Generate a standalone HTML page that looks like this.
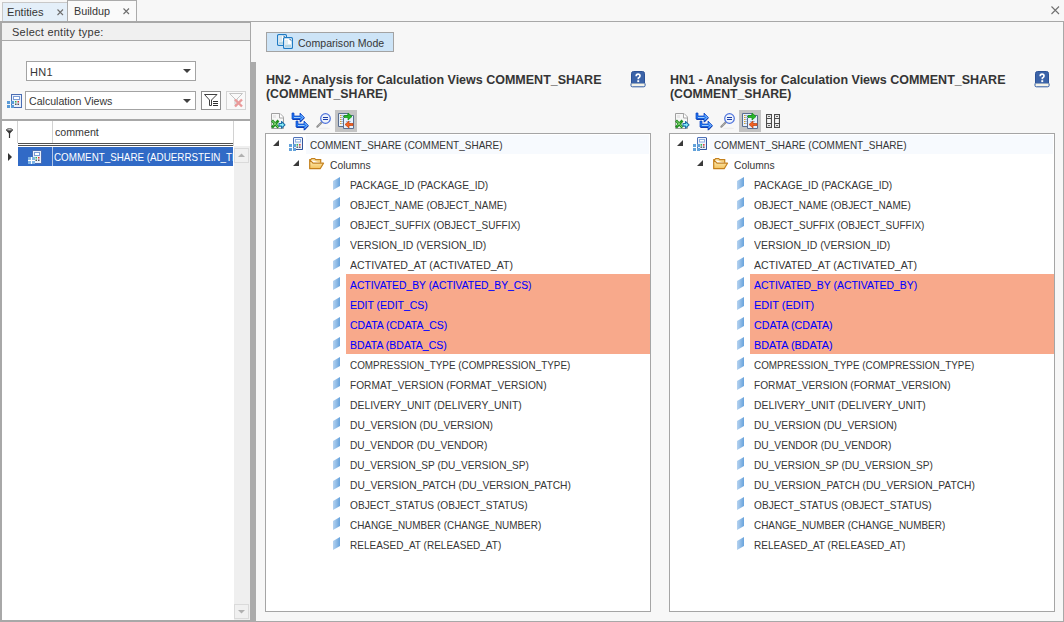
<!DOCTYPE html>
<html><head><meta charset="utf-8">
<style>
*{margin:0;padding:0;box-sizing:border-box}
html,body{width:1064px;height:622px;overflow:hidden;background:#f7f7f7;font-family:"Liberation Sans",sans-serif;font-size:11px;color:#363636;position:relative}
.a{position:absolute}
.t{position:absolute;white-space:pre;line-height:20px;height:20px;transform-origin:0 50%}
.c{transform:scaleX(.91)}
.m{transform:scaleX(.94)}
svg{position:absolute;overflow:visible}
</style></head><body>

<!-- ===== tabs ===== -->
<div class="a" style="left:2px;top:2px;width:66px;height:20px;background:#e4eff9;border:1px solid #c8c8c8;border-bottom:none"></div>
<div class="t" style="left:7px;top:2px;transform:scaleX(1.01)">Entities</div>
<svg style="left:0;top:0" width="1" height="1"><path d="M57.5 9.5l5.5 5.5M63 9.5l-5.5 5.5" stroke="#6e6e6e" stroke-width="1.1"/></svg>
<div class="a" style="left:67px;top:0;width:70px;height:23px;background:#fafafa;border:1px solid #ababab;border-bottom:none"></div>
<div class="t" style="left:74px;top:1px;transform:scaleX(.98)">Buildup</div>
<svg style="left:0;top:0" width="1" height="1"><path d="M123.5 8.5l5.5 5.5M129 8.5l-5.5 5.5" stroke="#6e6e6e" stroke-width="1.1"/></svg>
<svg style="left:0;top:0" width="1" height="1"><path d="M1051.5 6.5l7.5 7.5M1059 6.5l-7.5 7.5" stroke="#707070" stroke-width="1.1"/></svg>

<!-- frame top line -->
<div class="a" style="left:0;top:21px;width:1064px;height:1px;background:#a8a8a8"></div>

<!-- ===== left panel ===== -->
<div class="a" style="left:0;top:21px;width:251px;height:601px;border-left:2px solid #a8a8a8;border-top:2px solid #a8a8a8;border-bottom:2px solid #a8a8a8;border-right:1px solid #a8a8a8;background:#f7f7f7"></div>
<div class="a" style="left:2px;top:23px;width:248px;height:18px;background:#f0f0f0;border-bottom:1px solid #a8a8a8"></div>
<div class="t" style="left:12px;top:22px;letter-spacing:.25px">Select entity type:</div>

<!-- combos -->
<div class="a" style="left:26px;top:61px;width:170px;height:20px;background:#fff;border:1px solid #a3a3a3"></div>
<div class="t" style="left:30px;top:62px;letter-spacing:.3px">HN1</div>
<svg style="left:0;top:0" width="1" height="1"><path d="M183 69h8l-4 4z" fill="#404040"/></svg>

<div class="a" style="left:25px;top:91px;width:171px;height:19px;background:#fff;border:1px solid #a3a3a3"></div>
<div class="t" style="left:29px;top:91px;transform:scaleX(.963)">Calculation Views</div>
<svg style="left:0;top:0" width="1" height="1"><path d="M183 99h8l-4 4z" fill="#404040"/></svg>
<!-- calc icon small -->
<svg style="left:7px;top:94px" width="15" height="15" viewBox="0 0 15 15">
 <rect x="4.5" y="0.5" width="10" height="13" fill="#e9f0fb" stroke="#4a6db3"/>
 <rect x="6.5" y="2.5" width="6" height="3" fill="#fff" stroke="#7a9cd6"/>
 <rect x="8" y="7" width="1.5" height="1.5" fill="#2db34a"/><rect x="10.5" y="7" width="1.5" height="1.5" fill="#e03030"/>
 <rect x="8" y="9.5" width="1.5" height="1.5" fill="#555"/><rect x="10.5" y="9.5" width="1.5" height="1.5" fill="#555"/>
 <rect x="0" y="7" width="3" height="3" fill="#5a9ad6"/><rect x="4" y="7" width="3" height="3" fill="#5a9ad6"/>
 <rect x="0" y="11" width="3" height="3" fill="#5a9ad6"/><rect x="4" y="11" width="3" height="3" fill="#5a9ad6"/>
</svg>
<!-- filter buttons -->
<div class="a" style="left:201px;top:91px;width:20px;height:19px;border:1px solid #8e8e8e;background:#fff"></div>
<svg style="left:0;top:0" width="1" height="1"><path d="M204.5 94.5h12.5l-5.5 5.5v5.5h-2v-5.5z" fill="none" stroke="#404040" stroke-linejoin="round"/><path d="M213 101.5h5M213 103.5h5M213 105.5h5" stroke="#303030"/></svg>
<div class="a" style="left:226px;top:91px;width:20px;height:19px;border:1px solid #d4d4d4;background:#f9f9f9"></div>
<svg style="left:0;top:0" width="1" height="1"><path d="M229.5 93.5h13l-5.5 5.5v5.5h-2v-5.5z" fill="none" stroke="#c4c4c4"/><path d="M235 99.5l7 7M242 99.5l-7 7" stroke="#e99a9a" stroke-width="2.4"/></svg>

<!-- separator -->
<div class="a" style="left:2px;top:119px;width:248px;height:2px;background:#a8a8a8"></div>

<!-- grid -->
<div class="a" style="left:2px;top:121px;width:248px;height:499px;background:#fff"></div>
<div class="a" style="left:17px;top:121px;width:1px;height:22px;background:#d2d2d2"></div>
<div class="a" style="left:52px;top:121px;width:1px;height:22px;background:#d2d2d2"></div>
<div class="a" style="left:233px;top:121px;width:1px;height:25px;background:#d2d2d2"></div>
<svg style="left:0;top:0" width="1" height="1"><ellipse cx="9.5" cy="130" rx="3.2" ry="1.2" fill="none" stroke="#333" stroke-width="1"/><path d="M6.5 130.5l2.5 3h1l2.5-3z" fill="#333"/><path d="M9.5 133v5" stroke="#333" stroke-width="1.2"/></svg>
<div class="t" style="left:55px;top:122px;transform:scaleX(.968)">comment</div>
<div class="a" style="left:18px;top:143px;width:215px;height:1px;background:#505050"></div>
<div class="a" style="left:18px;top:145px;width:215px;height:1px;background:#505050"></div>
<div class="a" style="left:18px;top:147px;width:215px;height:19px;background:#316ac6"></div>
<div class="a" style="left:52px;top:147px;width:1px;height:19px;background:#b4c6e6"></div>
<svg style="left:0;top:0" width="1" height="1"><path d="M8 153v8l4-4z" fill="#333"/></svg>
<svg style="left:28px;top:150px" width="15" height="15" viewBox="0 0 15 15">
 <rect x="4.5" y="0.5" width="9" height="13" fill="#e9f0fb" stroke="#4a6db3"/>
 <rect x="6.5" y="2.5" width="5" height="3" fill="#fff" stroke="#7a9cd6"/>
 <rect x="7.5" y="7" width="1.5" height="1.5" fill="#2db34a"/><rect x="10" y="7" width="1.5" height="1.5" fill="#e03030"/>
 <rect x="7.5" y="9.5" width="1.5" height="1.5" fill="#555"/><rect x="10" y="9.5" width="1.5" height="1.5" fill="#555"/>
 <rect x="0" y="7" width="3" height="3" fill="#7fb4e4"/><rect x="4" y="7" width="3" height="3" fill="#7fb4e4"/>
 <rect x="0" y="11" width="3" height="3" fill="#7fb4e4"/><rect x="4" y="11" width="3" height="3" fill="#7fb4e4"/>
 <path d="M3.5 7v7M0 10.5h7" stroke="#fff"/>
</svg>
<div class="a" style="left:53px;top:147px;width:180px;height:19px;overflow:hidden">
 <div class="t" style="left:1px;top:0px;color:#fff;transform:scaleX(.893)">COMMENT_SHARE (ADUERRSTEIN_TEST)</div>
</div>
<!-- scrollbar -->
<div class="a" style="left:234px;top:146px;width:16px;height:474px;background:#efefef"></div>
<div class="a" style="left:234px;top:148px;width:15px;height:15px;border:1px solid #dadada;background:#f0f0f0"></div>
<svg style="left:0;top:0" width="1" height="1"><path d="M238 157h7l-3.5-3.5z" fill="#b0b0b0"/></svg>
<div class="a" style="left:234px;top:604px;width:15px;height:15px;border:1px solid #dadada;background:#f0f0f0"></div>
<svg style="left:0;top:0" width="1" height="1"><path d="M238 610h7l-3.5 3.5z" fill="#b0b0b0"/></svg>

<!-- splitter bar -->
<div class="a" style="left:250px;top:62px;width:6px;height:560px;background:#ababab"></div>

<!-- ===== right area ===== -->
<div class="a" style="left:1063px;top:21px;width:1px;height:601px;background:#a8a8a8"></div>
<div class="a" style="left:256px;top:621px;width:808px;height:1px;background:#a8a8a8"></div>

<!-- comparison mode -->
<div class="a" style="left:266px;top:32px;width:128px;height:20px;background:#cde4f7;border:1px solid #a3a3a3"></div>
<svg style="left:277px;top:34px" width="16" height="15" viewBox="0 0 16 15">
 <rect x="0.6" y="0.6" width="8.8" height="10.8" rx="1" fill="#fff" stroke="#1f7bc4" stroke-width="1.2"/>
 <rect x="2" y="2" width="3" height="5" fill="#d6e6ee"/><rect x="2" y="7.5" width="6" height="2.5" fill="#b4d6e4"/>
 <path d="M6.6 1.8q0.8 1.5 1.8 1.8" stroke="#1a5e9a" stroke-width="1" fill="none"/>
 <rect x="6.6" y="3.6" width="8.8" height="10.8" rx="1" fill="#fff" stroke="#1f7bc4" stroke-width="1.2"/>
 <rect x="8" y="6" width="3" height="4" fill="#e0edf2"/><rect x="8" y="10.5" width="6" height="2.5" fill="#b4d6e4"/>
 <path d="M12.6 4.8q0.8 1.5 1.8 1.8" stroke="#1a5e9a" stroke-width="1" fill="none"/>
</svg>
<div class="t" style="left:298px;top:33px;transform:scaleX(.959)">Comparison Mode</div>

<!-- titles -->
<div class="a" style="left:266px;top:73px;font-size:12.5px;font-weight:bold;line-height:14px;color:#353535;white-space:pre">HN2 - Analysis for Calculation Views COMMENT_SHARE</div>
<div class="a" style="left:266px;top:87px;font-size:12.5px;font-weight:bold;line-height:14px;color:#353535;white-space:pre;transform:scaleX(.982);transform-origin:0 0">(COMMENT_SHARE)</div>
<div class="a" style="left:670px;top:73px;font-size:12.5px;font-weight:bold;line-height:14px;color:#353535;white-space:pre">HN1 - Analysis for Calculation Views COMMENT_SHARE</div>
<div class="a" style="left:670px;top:87px;font-size:12.5px;font-weight:bold;line-height:14px;color:#353535;white-space:pre;transform:scaleX(.982);transform-origin:0 0">(COMMENT_SHARE)</div>

<!-- PANELS_PLACEHOLDER -->
<svg style="left:630px;top:71px" width="16" height="16" viewBox="0 0 16 16">
 <path d="M1.5 2.5q0-2 2-2h9q2 0 2 2v10.5h-13z" fill="#3b63a8" stroke="#2c5296"/>
 <rect x="1" y="12.5" width="14" height="2" fill="#f4f2e4"/>
 <path d="M1 12.5v2q0 1.3 1.3 1.3h11.5q1.3 0 1.3-1.3v-2" fill="none" stroke="#2f5aa0"/>
 <path d="M6.2 5.2q0-2 1.9-2t1.9 1.9q0 1.3-1.6 1.9v1.3" fill="none" stroke="#fff" stroke-width="1.7"/><rect x="7.3" y="9.2" width="1.9" height="1.9" fill="#fff"/>
</svg>
<svg style="left:269px;top:111px" width="20" height="20" viewBox="0 0 20 20">
 <path d="M2.5 2.5h8.5l3.5 3.5v11.5h-12z" fill="#f7f7f7" stroke="#a0a0a0"/><path d="M10.5 2.5v4.5h4" fill="#fff" stroke="#a8a8a8"/>
 <rect x="4" y="4" width="3" height="3" fill="#e8e8e8"/>
 <path d="M3 9.5l6.5 7M9.5 9.5l-6.5 7" stroke="#1f8f1f" stroke-width="2.6"/>
 <path d="M3.5 10l6 6.3M7 11.5l-2.5 3" stroke="#9ee08a" stroke-width="0.9"/>
 <path d="M10 12.5h2.5v-2l3.5 3.3-3.5 3.3v-2H10z" fill="#86f0f8" stroke="#1d6ea8" stroke-width="1.1" stroke-linejoin="round"/>
</svg>
<svg style="left:289px;top:110px" width="22" height="22" viewBox="0 0 22 22">
 <g id="ar265"><path d="M3 3H5V6H11V3L15.5 7.5L11 12V9H3Z" fill="#1f74ee" stroke="#0a3fc0" stroke-width="0.7" stroke-linejoin="round"/>
 <path d="M5 7.5H11.5M11.8 5.2L14 7.5L11.8 9.8" fill="none" stroke="#bfe2ff" stroke-width="0.8"/>
 <path d="M3.5 9.5H11M11.3 12.3L15.3 8" stroke="#0030a8" stroke-width="0.9"/></g>
 <use href="#ar265" x="4" y="8"/>
</svg>
<svg style="left:315px;top:111px" width="18" height="19" viewBox="0 0 18 19">
 <ellipse cx="9.5" cy="17.3" rx="5.5" ry="0.9" fill="#ececec"/>
 <path d="M6.8 11.2L2.3 15.7" stroke="#8c8c8c" stroke-width="2" stroke-linecap="round"/>
 <path d="M6.3 11.7L2.8 15.2" stroke="#e0e0e0" stroke-width="0.6" stroke-dasharray="1 1"/>
 <circle cx="10.5" cy="7.5" r="4.8" fill="#eef3fb" stroke="#4d72dc" stroke-width="1.2"/>
 <path d="M8 6.5h5M8 8.5h5" stroke="#1c3fa8" stroke-width="1"/>
</svg>
<div class="a" style="left:335px;top:110px;width:22px;height:22px;background:#c4c4c4"></div>
<svg style="left:338px;top:113px" width="17" height="17" viewBox="0 0 17 17">
 <path d="M0.5 0.5h9.5v13h-9.5z" fill="#e6f1fd" stroke="#5a6e90"/>
 <path d="M5.5 2.5h10v13h-10z" fill="#e6f1fd" stroke="#5a6e90"/>
 <path d="M3 2.5h4M3 4.5h4M3 6.5h2M3 8.5h2M3 10.5h2M8 8.5h5M8 10.5h5M8 12.5h5" stroke="#a6bcdc"/>
 <path d="M2 2.5h1.3M2 4.5h1.3M2 6.5h1.3M2 8.5h1.3M2 10.5h1.3" stroke="#e2a326"/>
 <path d="M6 2.5h4v-2.5l4 3.5-4 3.5v-2.5H6z" fill="#28b828" stroke="#118c11" stroke-width="0.7" stroke-linejoin="round"/>
 <path d="M15 10.5h-4v-2.5l-4 3.5 4 3.5v-2.5H15z" fill="#f26222" stroke="#c24412" stroke-width="0.7" stroke-linejoin="round"/>
</svg>
<div class="a" style="left:265px;top:133px;width:386px;height:479px;background:#fff;border:1px solid #a5a5a5"></div>
<div class="a" style="left:306px;top:135px;width:343px;height:19px;background:#f7fafe"></div>
<div class="a" style="left:346px;top:274px;width:304px;height:80px;background:#f8a98b"></div>
<svg style="left:0;top:0" width="1" height="1"><path d="M273 146h6v-6z" fill="#3a3a3a"/></svg>
<svg style="left:289px;top:137px" width="15" height="15" viewBox="0 0 15 15">
 <rect x="4.5" y="0.5" width="9" height="12" rx="0.5" fill="#edf3fc" stroke="#5072b8"/>
 <path d="M13.5 1v11.5H5" stroke="#33539c" fill="none"/>
 <rect x="6.5" y="2.5" width="5" height="2.5" fill="#fff" stroke="#8eaee0"/>
 <circle cx="8.3" cy="7.8" r="0.9" fill="#22b040"/><circle cx="10.8" cy="7.8" r="0.9" fill="#e02828"/>
 <circle cx="8.3" cy="10.2" r="0.9" fill="#6a6a6a"/><circle cx="10.8" cy="10.2" r="0.9" fill="#6a6a6a"/>
 <rect x="0" y="7" width="3" height="3" fill="#63a2da"/><rect x="4" y="7" width="3" height="3" fill="#63a2da"/>
 <rect x="0" y="11" width="3" height="3" fill="#63a2da"/><rect x="4" y="11" width="3" height="3" fill="#63a2da"/>
</svg>
<div class="t" style="left:310px;top:135px;transform:scaleX(0.9077)">COMMENT_SHARE (COMMENT_SHARE)</div>
<svg style="left:0;top:0" width="1" height="1"><path d="M293 166h6v-6z" fill="#3a3a3a"/></svg>
<svg style="left:309px;top:158px" width="15" height="12" viewBox="0 0 15 12">
 <defs><linearGradient id="fg309" x1="0" y1="0" x2="0" y2="1"><stop offset="0" stop-color="#fff3c4"/><stop offset="1" stop-color="#f3c25c"/></linearGradient></defs>
 <path d="M0.7 1.7h1l1-1h3l1 1h5v3" fill="url(#fg309)" stroke="#c4801c" stroke-width="1.2"/>
 <path d="M0.7 1.7v9h10.5l3.3-5.5H4z" fill="url(#fg309)" stroke="#c4801c" stroke-width="1.2" stroke-linejoin="round"/>
</svg>
<div class="t" style="left:330px;top:155px;transform:scaleX(0.9339)">Columns</div>
<svg style="left:333px;top:177px" width="7" height="13" viewBox="0 0 7 13"><defs><linearGradient id="cg" x1="0" y1="0" x2="1" y2="0"><stop offset="0" stop-color="#b6d3f0"/><stop offset="1" stop-color="#68a3dc"/></linearGradient></defs><path d="M0 4L7 0v9L0 13z" fill="url(#cg)"/></svg>
<div class="t" style="left:350px;top:175px;transform:scaleX(0.9254)">PACKAGE_ID (PACKAGE_ID)</div>
<svg style="left:333px;top:197px" width="7" height="13" viewBox="0 0 7 13"><defs><linearGradient id="cg" x1="0" y1="0" x2="1" y2="0"><stop offset="0" stop-color="#b6d3f0"/><stop offset="1" stop-color="#68a3dc"/></linearGradient></defs><path d="M0 4L7 0v9L0 13z" fill="url(#cg)"/></svg>
<div class="t" style="left:350px;top:195px;transform:scaleX(0.906)">OBJECT_NAME (OBJECT_NAME)</div>
<svg style="left:333px;top:217px" width="7" height="13" viewBox="0 0 7 13"><defs><linearGradient id="cg" x1="0" y1="0" x2="1" y2="0"><stop offset="0" stop-color="#b6d3f0"/><stop offset="1" stop-color="#68a3dc"/></linearGradient></defs><path d="M0 4L7 0v9L0 13z" fill="url(#cg)"/></svg>
<div class="t" style="left:350px;top:215px;transform:scaleX(0.9082)">OBJECT_SUFFIX (OBJECT_SUFFIX)</div>
<svg style="left:333px;top:237px" width="7" height="13" viewBox="0 0 7 13"><defs><linearGradient id="cg" x1="0" y1="0" x2="1" y2="0"><stop offset="0" stop-color="#b6d3f0"/><stop offset="1" stop-color="#68a3dc"/></linearGradient></defs><path d="M0 4L7 0v9L0 13z" fill="url(#cg)"/></svg>
<div class="t" style="left:350px;top:235px;transform:scaleX(0.9491)">VERSION_ID (VERSION_ID)</div>
<svg style="left:333px;top:257px" width="7" height="13" viewBox="0 0 7 13"><defs><linearGradient id="cg" x1="0" y1="0" x2="1" y2="0"><stop offset="0" stop-color="#b6d3f0"/><stop offset="1" stop-color="#68a3dc"/></linearGradient></defs><path d="M0 4L7 0v9L0 13z" fill="url(#cg)"/></svg>
<div class="t" style="left:350px;top:255px;transform:scaleX(0.9643)">ACTIVATED_AT (ACTIVATED_AT)</div>
<svg style="left:333px;top:277px" width="7" height="13" viewBox="0 0 7 13"><defs><linearGradient id="cg" x1="0" y1="0" x2="1" y2="0"><stop offset="0" stop-color="#b6d3f0"/><stop offset="1" stop-color="#68a3dc"/></linearGradient></defs><path d="M0 4L7 0v9L0 13z" fill="url(#cg)"/></svg>
<div class="t" style="left:350px;top:275px;transform:scaleX(0.9389);color:#0000ff;-webkit-text-stroke:0.08px #0000ff">ACTIVATED_BY (ACTIVATED_BY_CS)</div>
<svg style="left:333px;top:297px" width="7" height="13" viewBox="0 0 7 13"><defs><linearGradient id="cg" x1="0" y1="0" x2="1" y2="0"><stop offset="0" stop-color="#b6d3f0"/><stop offset="1" stop-color="#68a3dc"/></linearGradient></defs><path d="M0 4L7 0v9L0 13z" fill="url(#cg)"/></svg>
<div class="t" style="left:350px;top:295px;transform:scaleX(0.9529);color:#0000ff;-webkit-text-stroke:0.08px #0000ff">EDIT (EDIT_CS)</div>
<svg style="left:333px;top:317px" width="7" height="13" viewBox="0 0 7 13"><defs><linearGradient id="cg" x1="0" y1="0" x2="1" y2="0"><stop offset="0" stop-color="#b6d3f0"/><stop offset="1" stop-color="#68a3dc"/></linearGradient></defs><path d="M0 4L7 0v9L0 13z" fill="url(#cg)"/></svg>
<div class="t" style="left:350px;top:315px;transform:scaleX(0.9481);color:#0000ff;-webkit-text-stroke:0.08px #0000ff">CDATA (CDATA_CS)</div>
<svg style="left:333px;top:337px" width="7" height="13" viewBox="0 0 7 13"><defs><linearGradient id="cg" x1="0" y1="0" x2="1" y2="0"><stop offset="0" stop-color="#b6d3f0"/><stop offset="1" stop-color="#68a3dc"/></linearGradient></defs><path d="M0 4L7 0v9L0 13z" fill="url(#cg)"/></svg>
<div class="t" style="left:350px;top:335px;transform:scaleX(0.9555);color:#0000ff;-webkit-text-stroke:0.08px #0000ff">BDATA (BDATA_CS)</div>
<svg style="left:333px;top:357px" width="7" height="13" viewBox="0 0 7 13"><defs><linearGradient id="cg" x1="0" y1="0" x2="1" y2="0"><stop offset="0" stop-color="#b6d3f0"/><stop offset="1" stop-color="#68a3dc"/></linearGradient></defs><path d="M0 4L7 0v9L0 13z" fill="url(#cg)"/></svg>
<div class="t" style="left:350px;top:355px;transform:scaleX(0.8988)">COMPRESSION_TYPE (COMPRESSION_TYPE)</div>
<svg style="left:333px;top:377px" width="7" height="13" viewBox="0 0 7 13"><defs><linearGradient id="cg" x1="0" y1="0" x2="1" y2="0"><stop offset="0" stop-color="#b6d3f0"/><stop offset="1" stop-color="#68a3dc"/></linearGradient></defs><path d="M0 4L7 0v9L0 13z" fill="url(#cg)"/></svg>
<div class="t" style="left:350px;top:375px;transform:scaleX(0.9231)">FORMAT_VERSION (FORMAT_VERSION)</div>
<svg style="left:333px;top:397px" width="7" height="13" viewBox="0 0 7 13"><defs><linearGradient id="cg" x1="0" y1="0" x2="1" y2="0"><stop offset="0" stop-color="#b6d3f0"/><stop offset="1" stop-color="#68a3dc"/></linearGradient></defs><path d="M0 4L7 0v9L0 13z" fill="url(#cg)"/></svg>
<div class="t" style="left:350px;top:395px;transform:scaleX(0.9428)">DELIVERY_UNIT (DELIVERY_UNIT)</div>
<svg style="left:333px;top:417px" width="7" height="13" viewBox="0 0 7 13"><defs><linearGradient id="cg" x1="0" y1="0" x2="1" y2="0"><stop offset="0" stop-color="#b6d3f0"/><stop offset="1" stop-color="#68a3dc"/></linearGradient></defs><path d="M0 4L7 0v9L0 13z" fill="url(#cg)"/></svg>
<div class="t" style="left:350px;top:415px;transform:scaleX(0.9322)">DU_VERSION (DU_VERSION)</div>
<svg style="left:333px;top:437px" width="7" height="13" viewBox="0 0 7 13"><defs><linearGradient id="cg" x1="0" y1="0" x2="1" y2="0"><stop offset="0" stop-color="#b6d3f0"/><stop offset="1" stop-color="#68a3dc"/></linearGradient></defs><path d="M0 4L7 0v9L0 13z" fill="url(#cg)"/></svg>
<div class="t" style="left:350px;top:435px;transform:scaleX(0.9246)">DU_VENDOR (DU_VENDOR)</div>
<svg style="left:333px;top:457px" width="7" height="13" viewBox="0 0 7 13"><defs><linearGradient id="cg" x1="0" y1="0" x2="1" y2="0"><stop offset="0" stop-color="#b6d3f0"/><stop offset="1" stop-color="#68a3dc"/></linearGradient></defs><path d="M0 4L7 0v9L0 13z" fill="url(#cg)"/></svg>
<div class="t" style="left:350px;top:455px;transform:scaleX(0.9185)">DU_VERSION_SP (DU_VERSION_SP)</div>
<svg style="left:333px;top:477px" width="7" height="13" viewBox="0 0 7 13"><defs><linearGradient id="cg" x1="0" y1="0" x2="1" y2="0"><stop offset="0" stop-color="#b6d3f0"/><stop offset="1" stop-color="#68a3dc"/></linearGradient></defs><path d="M0 4L7 0v9L0 13z" fill="url(#cg)"/></svg>
<div class="t" style="left:350px;top:475px;transform:scaleX(0.9324)">DU_VERSION_PATCH (DU_VERSION_PATCH)</div>
<svg style="left:333px;top:497px" width="7" height="13" viewBox="0 0 7 13"><defs><linearGradient id="cg" x1="0" y1="0" x2="1" y2="0"><stop offset="0" stop-color="#b6d3f0"/><stop offset="1" stop-color="#68a3dc"/></linearGradient></defs><path d="M0 4L7 0v9L0 13z" fill="url(#cg)"/></svg>
<div class="t" style="left:350px;top:495px;transform:scaleX(0.9211)">OBJECT_STATUS (OBJECT_STATUS)</div>
<svg style="left:333px;top:517px" width="7" height="13" viewBox="0 0 7 13"><defs><linearGradient id="cg" x1="0" y1="0" x2="1" y2="0"><stop offset="0" stop-color="#b6d3f0"/><stop offset="1" stop-color="#68a3dc"/></linearGradient></defs><path d="M0 4L7 0v9L0 13z" fill="url(#cg)"/></svg>
<div class="t" style="left:350px;top:515px;transform:scaleX(0.9015)">CHANGE_NUMBER (CHANGE_NUMBER)</div>
<svg style="left:333px;top:537px" width="7" height="13" viewBox="0 0 7 13"><defs><linearGradient id="cg" x1="0" y1="0" x2="1" y2="0"><stop offset="0" stop-color="#b6d3f0"/><stop offset="1" stop-color="#68a3dc"/></linearGradient></defs><path d="M0 4L7 0v9L0 13z" fill="url(#cg)"/></svg>
<div class="t" style="left:350px;top:535px;transform:scaleX(0.9095)">RELEASED_AT (RELEASED_AT)</div>
<svg style="left:1034px;top:71px" width="16" height="16" viewBox="0 0 16 16">
 <path d="M1.5 2.5q0-2 2-2h9q2 0 2 2v10.5h-13z" fill="#3b63a8" stroke="#2c5296"/>
 <rect x="1" y="12.5" width="14" height="2" fill="#f4f2e4"/>
 <path d="M1 12.5v2q0 1.3 1.3 1.3h11.5q1.3 0 1.3-1.3v-2" fill="none" stroke="#2f5aa0"/>
 <path d="M6.2 5.2q0-2 1.9-2t1.9 1.9q0 1.3-1.6 1.9v1.3" fill="none" stroke="#fff" stroke-width="1.7"/><rect x="7.3" y="9.2" width="1.9" height="1.9" fill="#fff"/>
</svg>
<svg style="left:673px;top:111px" width="20" height="20" viewBox="0 0 20 20">
 <path d="M2.5 2.5h8.5l3.5 3.5v11.5h-12z" fill="#f7f7f7" stroke="#a0a0a0"/><path d="M10.5 2.5v4.5h4" fill="#fff" stroke="#a8a8a8"/>
 <rect x="4" y="4" width="3" height="3" fill="#e8e8e8"/>
 <path d="M3 9.5l6.5 7M9.5 9.5l-6.5 7" stroke="#1f8f1f" stroke-width="2.6"/>
 <path d="M3.5 10l6 6.3M7 11.5l-2.5 3" stroke="#9ee08a" stroke-width="0.9"/>
 <path d="M10 12.5h2.5v-2l3.5 3.3-3.5 3.3v-2H10z" fill="#86f0f8" stroke="#1d6ea8" stroke-width="1.1" stroke-linejoin="round"/>
</svg>
<svg style="left:693px;top:110px" width="22" height="22" viewBox="0 0 22 22">
 <g id="ar669"><path d="M3 3H5V6H11V3L15.5 7.5L11 12V9H3Z" fill="#1f74ee" stroke="#0a3fc0" stroke-width="0.7" stroke-linejoin="round"/>
 <path d="M5 7.5H11.5M11.8 5.2L14 7.5L11.8 9.8" fill="none" stroke="#bfe2ff" stroke-width="0.8"/>
 <path d="M3.5 9.5H11M11.3 12.3L15.3 8" stroke="#0030a8" stroke-width="0.9"/></g>
 <use href="#ar669" x="4" y="8"/>
</svg>
<svg style="left:719px;top:111px" width="18" height="19" viewBox="0 0 18 19">
 <ellipse cx="9.5" cy="17.3" rx="5.5" ry="0.9" fill="#ececec"/>
 <path d="M6.8 11.2L2.3 15.7" stroke="#8c8c8c" stroke-width="2" stroke-linecap="round"/>
 <path d="M6.3 11.7L2.8 15.2" stroke="#e0e0e0" stroke-width="0.6" stroke-dasharray="1 1"/>
 <circle cx="10.5" cy="7.5" r="4.8" fill="#eef3fb" stroke="#4d72dc" stroke-width="1.2"/>
 <path d="M8 6.5h5M8 8.5h5" stroke="#1c3fa8" stroke-width="1"/>
</svg>
<div class="a" style="left:739px;top:110px;width:22px;height:22px;background:#c4c4c4"></div>
<svg style="left:742px;top:113px" width="17" height="17" viewBox="0 0 17 17">
 <path d="M0.5 0.5h9.5v13h-9.5z" fill="#e6f1fd" stroke="#5a6e90"/>
 <path d="M5.5 2.5h10v13h-10z" fill="#e6f1fd" stroke="#5a6e90"/>
 <path d="M3 2.5h4M3 4.5h4M3 6.5h2M3 8.5h2M3 10.5h2M8 8.5h5M8 10.5h5M8 12.5h5" stroke="#a6bcdc"/>
 <path d="M2 2.5h1.3M2 4.5h1.3M2 6.5h1.3M2 8.5h1.3M2 10.5h1.3" stroke="#e2a326"/>
 <path d="M6 2.5h4v-2.5l4 3.5-4 3.5v-2.5H6z" fill="#28b828" stroke="#118c11" stroke-width="0.7" stroke-linejoin="round"/>
 <path d="M15 10.5h-4v-2.5l-4 3.5 4 3.5v-2.5H15z" fill="#f26222" stroke="#c24412" stroke-width="0.7" stroke-linejoin="round"/>
</svg>
<svg style="left:766px;top:114px" width="14" height="14" viewBox="0 0 14 14">
 <g fill="none" stroke="#4b4b4b" stroke-width="1.1"><rect x="0.55" y="0.55" width="4.9" height="12.9"/><rect x="8.55" y="0.55" width="4.9" height="12.9"/>
 <path d="M0.5 4.5h5M0.5 9.5h5M8.5 4.5h5M8.5 9.5h5"/></g>
 <path d="M2 2.5h2M2 11.5h2M10 2.5h2M10 11.5h2" stroke="#555" stroke-width="0.9"/>
</svg>
<div class="a" style="left:669px;top:133px;width:386px;height:479px;background:#fff;border:1px solid #a5a5a5"></div>
<div class="a" style="left:710px;top:135px;width:343px;height:19px;background:#f7fafe"></div>
<div class="a" style="left:750px;top:274px;width:304px;height:80px;background:#f8a98b"></div>
<svg style="left:0;top:0" width="1" height="1"><path d="M677 146h6v-6z" fill="#3a3a3a"/></svg>
<svg style="left:693px;top:137px" width="15" height="15" viewBox="0 0 15 15">
 <rect x="4.5" y="0.5" width="9" height="12" rx="0.5" fill="#edf3fc" stroke="#5072b8"/>
 <path d="M13.5 1v11.5H5" stroke="#33539c" fill="none"/>
 <rect x="6.5" y="2.5" width="5" height="2.5" fill="#fff" stroke="#8eaee0"/>
 <circle cx="8.3" cy="7.8" r="0.9" fill="#22b040"/><circle cx="10.8" cy="7.8" r="0.9" fill="#e02828"/>
 <circle cx="8.3" cy="10.2" r="0.9" fill="#6a6a6a"/><circle cx="10.8" cy="10.2" r="0.9" fill="#6a6a6a"/>
 <rect x="0" y="7" width="3" height="3" fill="#63a2da"/><rect x="4" y="7" width="3" height="3" fill="#63a2da"/>
 <rect x="0" y="11" width="3" height="3" fill="#63a2da"/><rect x="4" y="11" width="3" height="3" fill="#63a2da"/>
</svg>
<div class="t" style="left:714px;top:135px;transform:scaleX(0.9077)">COMMENT_SHARE (COMMENT_SHARE)</div>
<svg style="left:0;top:0" width="1" height="1"><path d="M697 166h6v-6z" fill="#3a3a3a"/></svg>
<svg style="left:713px;top:158px" width="15" height="12" viewBox="0 0 15 12">
 <defs><linearGradient id="fg713" x1="0" y1="0" x2="0" y2="1"><stop offset="0" stop-color="#fff3c4"/><stop offset="1" stop-color="#f3c25c"/></linearGradient></defs>
 <path d="M0.7 1.7h1l1-1h3l1 1h5v3" fill="url(#fg713)" stroke="#c4801c" stroke-width="1.2"/>
 <path d="M0.7 1.7v9h10.5l3.3-5.5H4z" fill="url(#fg713)" stroke="#c4801c" stroke-width="1.2" stroke-linejoin="round"/>
</svg>
<div class="t" style="left:734px;top:155px;transform:scaleX(0.9339)">Columns</div>
<svg style="left:737px;top:177px" width="7" height="13" viewBox="0 0 7 13"><defs><linearGradient id="cg" x1="0" y1="0" x2="1" y2="0"><stop offset="0" stop-color="#b6d3f0"/><stop offset="1" stop-color="#68a3dc"/></linearGradient></defs><path d="M0 4L7 0v9L0 13z" fill="url(#cg)"/></svg>
<div class="t" style="left:754px;top:175px;transform:scaleX(0.9254)">PACKAGE_ID (PACKAGE_ID)</div>
<svg style="left:737px;top:197px" width="7" height="13" viewBox="0 0 7 13"><defs><linearGradient id="cg" x1="0" y1="0" x2="1" y2="0"><stop offset="0" stop-color="#b6d3f0"/><stop offset="1" stop-color="#68a3dc"/></linearGradient></defs><path d="M0 4L7 0v9L0 13z" fill="url(#cg)"/></svg>
<div class="t" style="left:754px;top:195px;transform:scaleX(0.906)">OBJECT_NAME (OBJECT_NAME)</div>
<svg style="left:737px;top:217px" width="7" height="13" viewBox="0 0 7 13"><defs><linearGradient id="cg" x1="0" y1="0" x2="1" y2="0"><stop offset="0" stop-color="#b6d3f0"/><stop offset="1" stop-color="#68a3dc"/></linearGradient></defs><path d="M0 4L7 0v9L0 13z" fill="url(#cg)"/></svg>
<div class="t" style="left:754px;top:215px;transform:scaleX(0.9082)">OBJECT_SUFFIX (OBJECT_SUFFIX)</div>
<svg style="left:737px;top:237px" width="7" height="13" viewBox="0 0 7 13"><defs><linearGradient id="cg" x1="0" y1="0" x2="1" y2="0"><stop offset="0" stop-color="#b6d3f0"/><stop offset="1" stop-color="#68a3dc"/></linearGradient></defs><path d="M0 4L7 0v9L0 13z" fill="url(#cg)"/></svg>
<div class="t" style="left:754px;top:235px;transform:scaleX(0.9491)">VERSION_ID (VERSION_ID)</div>
<svg style="left:737px;top:257px" width="7" height="13" viewBox="0 0 7 13"><defs><linearGradient id="cg" x1="0" y1="0" x2="1" y2="0"><stop offset="0" stop-color="#b6d3f0"/><stop offset="1" stop-color="#68a3dc"/></linearGradient></defs><path d="M0 4L7 0v9L0 13z" fill="url(#cg)"/></svg>
<div class="t" style="left:754px;top:255px;transform:scaleX(0.9643)">ACTIVATED_AT (ACTIVATED_AT)</div>
<svg style="left:737px;top:277px" width="7" height="13" viewBox="0 0 7 13"><defs><linearGradient id="cg" x1="0" y1="0" x2="1" y2="0"><stop offset="0" stop-color="#b6d3f0"/><stop offset="1" stop-color="#68a3dc"/></linearGradient></defs><path d="M0 4L7 0v9L0 13z" fill="url(#cg)"/></svg>
<div class="t" style="left:754px;top:275px;transform:scaleX(0.9493);color:#0000ff;-webkit-text-stroke:0.08px #0000ff">ACTIVATED_BY (ACTIVATED_BY)</div>
<svg style="left:737px;top:297px" width="7" height="13" viewBox="0 0 7 13"><defs><linearGradient id="cg" x1="0" y1="0" x2="1" y2="0"><stop offset="0" stop-color="#b6d3f0"/><stop offset="1" stop-color="#68a3dc"/></linearGradient></defs><path d="M0 4L7 0v9L0 13z" fill="url(#cg)"/></svg>
<div class="t" style="left:754px;top:295px;transform:scaleX(0.9978);color:#0000ff;-webkit-text-stroke:0.08px #0000ff">EDIT (EDIT)</div>
<svg style="left:737px;top:317px" width="7" height="13" viewBox="0 0 7 13"><defs><linearGradient id="cg" x1="0" y1="0" x2="1" y2="0"><stop offset="0" stop-color="#b6d3f0"/><stop offset="1" stop-color="#68a3dc"/></linearGradient></defs><path d="M0 4L7 0v9L0 13z" fill="url(#cg)"/></svg>
<div class="t" style="left:754px;top:315px;transform:scaleX(0.9702);color:#0000ff;-webkit-text-stroke:0.08px #0000ff">CDATA (CDATA)</div>
<svg style="left:737px;top:337px" width="7" height="13" viewBox="0 0 7 13"><defs><linearGradient id="cg" x1="0" y1="0" x2="1" y2="0"><stop offset="0" stop-color="#b6d3f0"/><stop offset="1" stop-color="#68a3dc"/></linearGradient></defs><path d="M0 4L7 0v9L0 13z" fill="url(#cg)"/></svg>
<div class="t" style="left:754px;top:335px;transform:scaleX(0.9849);color:#0000ff;-webkit-text-stroke:0.08px #0000ff">BDATA (BDATA)</div>
<svg style="left:737px;top:357px" width="7" height="13" viewBox="0 0 7 13"><defs><linearGradient id="cg" x1="0" y1="0" x2="1" y2="0"><stop offset="0" stop-color="#b6d3f0"/><stop offset="1" stop-color="#68a3dc"/></linearGradient></defs><path d="M0 4L7 0v9L0 13z" fill="url(#cg)"/></svg>
<div class="t" style="left:754px;top:355px;transform:scaleX(0.8988)">COMPRESSION_TYPE (COMPRESSION_TYPE)</div>
<svg style="left:737px;top:377px" width="7" height="13" viewBox="0 0 7 13"><defs><linearGradient id="cg" x1="0" y1="0" x2="1" y2="0"><stop offset="0" stop-color="#b6d3f0"/><stop offset="1" stop-color="#68a3dc"/></linearGradient></defs><path d="M0 4L7 0v9L0 13z" fill="url(#cg)"/></svg>
<div class="t" style="left:754px;top:375px;transform:scaleX(0.9231)">FORMAT_VERSION (FORMAT_VERSION)</div>
<svg style="left:737px;top:397px" width="7" height="13" viewBox="0 0 7 13"><defs><linearGradient id="cg" x1="0" y1="0" x2="1" y2="0"><stop offset="0" stop-color="#b6d3f0"/><stop offset="1" stop-color="#68a3dc"/></linearGradient></defs><path d="M0 4L7 0v9L0 13z" fill="url(#cg)"/></svg>
<div class="t" style="left:754px;top:395px;transform:scaleX(0.9428)">DELIVERY_UNIT (DELIVERY_UNIT)</div>
<svg style="left:737px;top:417px" width="7" height="13" viewBox="0 0 7 13"><defs><linearGradient id="cg" x1="0" y1="0" x2="1" y2="0"><stop offset="0" stop-color="#b6d3f0"/><stop offset="1" stop-color="#68a3dc"/></linearGradient></defs><path d="M0 4L7 0v9L0 13z" fill="url(#cg)"/></svg>
<div class="t" style="left:754px;top:415px;transform:scaleX(0.9322)">DU_VERSION (DU_VERSION)</div>
<svg style="left:737px;top:437px" width="7" height="13" viewBox="0 0 7 13"><defs><linearGradient id="cg" x1="0" y1="0" x2="1" y2="0"><stop offset="0" stop-color="#b6d3f0"/><stop offset="1" stop-color="#68a3dc"/></linearGradient></defs><path d="M0 4L7 0v9L0 13z" fill="url(#cg)"/></svg>
<div class="t" style="left:754px;top:435px;transform:scaleX(0.9246)">DU_VENDOR (DU_VENDOR)</div>
<svg style="left:737px;top:457px" width="7" height="13" viewBox="0 0 7 13"><defs><linearGradient id="cg" x1="0" y1="0" x2="1" y2="0"><stop offset="0" stop-color="#b6d3f0"/><stop offset="1" stop-color="#68a3dc"/></linearGradient></defs><path d="M0 4L7 0v9L0 13z" fill="url(#cg)"/></svg>
<div class="t" style="left:754px;top:455px;transform:scaleX(0.9185)">DU_VERSION_SP (DU_VERSION_SP)</div>
<svg style="left:737px;top:477px" width="7" height="13" viewBox="0 0 7 13"><defs><linearGradient id="cg" x1="0" y1="0" x2="1" y2="0"><stop offset="0" stop-color="#b6d3f0"/><stop offset="1" stop-color="#68a3dc"/></linearGradient></defs><path d="M0 4L7 0v9L0 13z" fill="url(#cg)"/></svg>
<div class="t" style="left:754px;top:475px;transform:scaleX(0.9324)">DU_VERSION_PATCH (DU_VERSION_PATCH)</div>
<svg style="left:737px;top:497px" width="7" height="13" viewBox="0 0 7 13"><defs><linearGradient id="cg" x1="0" y1="0" x2="1" y2="0"><stop offset="0" stop-color="#b6d3f0"/><stop offset="1" stop-color="#68a3dc"/></linearGradient></defs><path d="M0 4L7 0v9L0 13z" fill="url(#cg)"/></svg>
<div class="t" style="left:754px;top:495px;transform:scaleX(0.9211)">OBJECT_STATUS (OBJECT_STATUS)</div>
<svg style="left:737px;top:517px" width="7" height="13" viewBox="0 0 7 13"><defs><linearGradient id="cg" x1="0" y1="0" x2="1" y2="0"><stop offset="0" stop-color="#b6d3f0"/><stop offset="1" stop-color="#68a3dc"/></linearGradient></defs><path d="M0 4L7 0v9L0 13z" fill="url(#cg)"/></svg>
<div class="t" style="left:754px;top:515px;transform:scaleX(0.9015)">CHANGE_NUMBER (CHANGE_NUMBER)</div>
<svg style="left:737px;top:537px" width="7" height="13" viewBox="0 0 7 13"><defs><linearGradient id="cg" x1="0" y1="0" x2="1" y2="0"><stop offset="0" stop-color="#b6d3f0"/><stop offset="1" stop-color="#68a3dc"/></linearGradient></defs><path d="M0 4L7 0v9L0 13z" fill="url(#cg)"/></svg>
<div class="t" style="left:754px;top:535px;transform:scaleX(0.9095)">RELEASED_AT (RELEASED_AT)</div>
</body></html>
